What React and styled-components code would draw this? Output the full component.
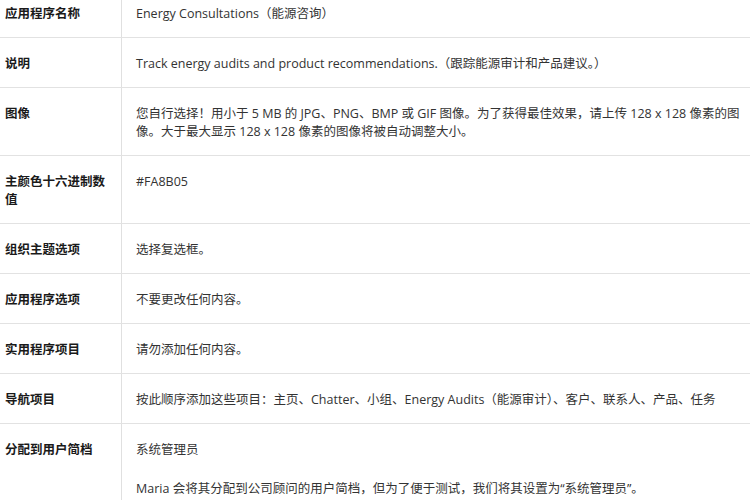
import React from "react";
import styled, { createGlobalStyle } from "styled-components";

const Global = createGlobalStyle`
  html, body { margin: 0; padding: 0; background: #fff; overflow: hidden; }
  body { font-family: "Open Sans", "Noto Sans CJK SC", sans-serif; }
`;

const Table = styled.div`
  width: 750px;
  margin-top: -12px;
  display: flex;
  flex-direction: column;
`;

const Row = styled.div`
  display: grid;
  grid-template-columns: 122px 1fr;
  border-bottom: 1px solid #e2e2e2;
`;

const Label = styled.div`
  box-sizing: border-box;
  border-right: 1px solid #e0e0e0;
  padding: 17px 6px 14px 5px;
  font-size: 12.5px;
  line-height: 18px;
  font-weight: 700;
  color: #1a1a1a;
`;

const Value = styled.div`
  padding: 17px 8px 14px 14px;
  font-size: 12.5px;
  line-height: 18px;
  color: #333;
`;

const Para = styled.p`
  margin: 0;
  & + & { margin-top: 21px; }
`;

const rows = [
  ["应用程序名称", ["Energy Consultations（能源咨询）"]],
  ["说明", ["Track energy audits and product recommendations.（跟踪能源审计和产品建议。）"]],
  ["图像", ["您自行选择！用小于 5 MB 的 JPG、PNG、BMP 或 GIF 图像。为了获得最佳效果，请上传 128 x 128 像素的图像。大于最大显示 128 x 128 像素的图像将被自动调整大小。"]],
  ["主颜色十六进制数值", ["#FA8B05"]],
  ["组织主题选项", ["选择复选框。"]],
  ["应用程序选项", ["不要更改任何内容。"]],
  ["实用程序项目", ["请勿添加任何内容。"]],
  ["导航项目", ["按此顺序添加这些项目：主页、Chatter、小组、Energy Audits（能源审计）、客户、联系人、产品、任务"]],
  ["分配到用户简档", ["系统管理员", "Maria 会将其分配到公司顾问的用户简档，但为了便于测试，我们将其设置为“系统管理员”。"]],
];

export default function App() {
  return (
    <>
      <Global />
      <Table>
        {rows.map(([label, paras]) => (
          <Row key={label}>
            <Label>{label}</Label>
            <Value>
              {paras.map((p, i) => (
                <Para key={i}>{p}</Para>
              ))}
            </Value>
          </Row>
        ))}
      </Table>
    </>
  );
}
